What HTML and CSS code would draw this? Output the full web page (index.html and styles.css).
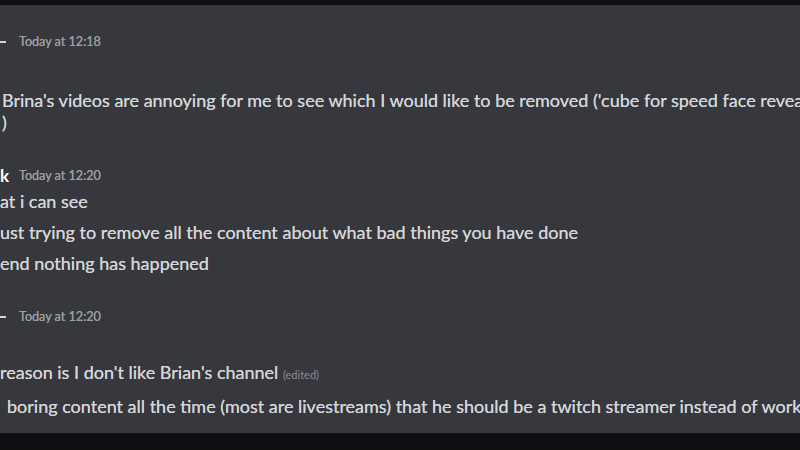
FILE: index.html
```html
<!DOCTYPE html>
<html>
<head>
<meta charset="utf-8">
<link rel="stylesheet" href="styles.css">
</head>
<body>
<div class="topbar"></div>
<main class="chat">
  <div class="header h1"><span class="dash"></span><span class="time">Today at 12:18</span></div>
  <div class="msg m-first">Brina's videos are annoying for me to see which I would like to be removed ('cube for speed face reveal'<br>)</div>

  <div class="header h2"><span class="name">k</span><span class="time">Today at 12:20</span></div>
  <div class="msg m-a">at i can see</div>
  <div class="msg m-b">ust trying to remove all the content about what bad things you have done</div>
  <div class="msg m-b">end nothing has happened</div>

  <div class="header h3"><span class="dash"></span><span class="time">Today at 12:20</span></div>
  <div class="msg m-c">reason is I don't like Brian's channel <span class="edited">(edited)</span></div>
  <div class="msg m-b indent">boring content all the time (most are livestreams) that he should be a twitch streamer instead of working</div>
</main>
<div class="bottombar"></div>
</body>
</html>
```
FILE: styles.css
```css
html, body {
  margin: 0;
  padding: 0;
  width: 800px;
  height: 450px;
  overflow: hidden;
  background: #0f0f11;
}
.topbar {
  height: 5px;
  background: #0f0f11;
}
.bottombar {
  height: 17px;
  background: #0f0f11;
}
.chat {
  height: 428px;
  box-sizing: border-box;
  background: #36383e;
  padding-top: 26px;
  font-family: Lato, "Noto Sans", sans-serif;
  color: #d4d5d7;
  overflow: hidden;
}
.header {
  height: 22px;
  line-height: 22px;
  display: flex;
  align-items: center;
  white-space: nowrap;
}
.dash {
  display: block;
  width: 6px;
  height: 2px;
  background: #d4d5d7;
  margin-right: 13px;
}
.name {
  width: 19px;
  font-size: 17px;
  font-weight: 700;
  color: #ffffff;
  line-height: 22px;
}
.time {
  font-size: 12.6px;
  color: #9c9ea2;
  text-shadow: 0 0 0.4px #9c9ea2;
}
.h2 { margin-top: 32px; }
.h3 { margin-top: 32px; }
.msg {
  font-size: 18px;
  line-height: 22px;
  white-space: nowrap;
  padding-left: 2px;
  text-shadow: 0 0 0.5px #d4d5d7;
}
.m-first { margin-top: 36px; }
.m-a { margin-top: 3px; padding-left: 0; }
.m-b { margin-top: 9px; padding-left: 0; }
.m-c { margin-top: 33px; padding-left: 0; }
.indent { padding-left: 7px; }
.edited {
  font-size: 11px;
  color: #8a8c90;
  text-shadow: none;
}
```
